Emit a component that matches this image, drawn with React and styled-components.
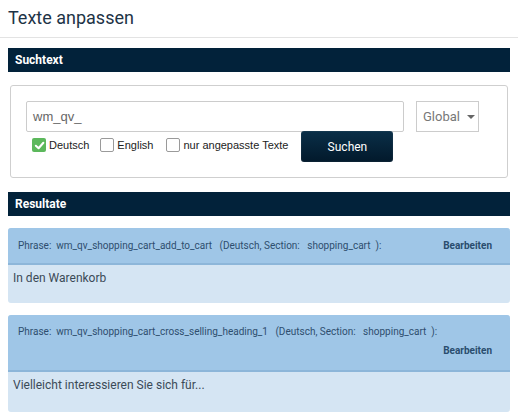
import React from "react";
import styled, { createGlobalStyle } from "styled-components";

const GlobalStyle = createGlobalStyle`
  body {
    margin: 0;
    background: #fff;
    font-family: Roboto, "Liberation Sans", sans-serif;
  }
`;

const Page = styled.div`
  width: 518px;
  height: 420px;
  overflow: hidden;
`;

const TitleBar = styled.div`
  padding: 6px 8px 0;
  height: 31px;
  border-bottom: 1px solid #e3e3e3;
`;

const Title = styled.h1`
  margin: 0;
  font-size: 18px;
  font-weight: 400;
  color: #1d3346;
  line-height: 24px;
`;

const Content = styled.div`
  padding: 10px 8px 0;
`;

const SectionBar = styled.div`
  background: #02223a;
  color: #fff;
  font-size: 12px;
  font-weight: 700;
  height: 24px;
  line-height: 24px;
  padding: 0 7px;
`;

const SearchBox = styled.div`
  margin: 13px 2px 14px;
  border: 1px solid #cfcfcf;
  border-radius: 3px;
  height: 93px;
  padding: 15px 15px 0;
  box-sizing: border-box;
`;

const InputRow = styled.div`
  display: flex;
  gap: 12px;
`;

const TextInput = styled.div`
  width: 378px;
  height: 31px;
  box-sizing: border-box;
  border: 1px solid #cccccc;
  border-radius: 2px;
  padding: 0 6px;
  font-family: "Liberation Sans", Arial, sans-serif;
  font-size: 13px;
  line-height: 29px;
  color: #666;
`;

const Select = styled.div`
  width: 63px;
  height: 31px;
  box-sizing: border-box;
  border: 1px solid #cccccc;
  display: flex;
  align-items: center;
  padding: 0 6px;
  gap: 7px;
  font-size: 13px;
  color: #777;
`;

const Caret = styled.span`
  width: 0;
  height: 0;
  border-left: 4px solid transparent;
  border-right: 4px solid transparent;
  border-top: 4px solid #666;
`;

const OptionRow = styled.div`
  display: flex;
  align-items: flex-start;
  padding-left: 6px;
`;

const CheckLabel = styled.label`
  display: flex;
  align-items: center;
  gap: 3px;
  margin-top: 6px;
  margin-right: ${(p) => p.mr}px;
  font-family: "Liberation Sans", Arial, sans-serif;
  font-size: 11px;
  color: #222;
`;

const Box = styled.span`
  width: 14px;
  height: 14px;
  box-sizing: border-box;
  border-radius: 2px;
  border: ${(p) => (p.checked ? "none" : "1px solid #9a9a9a")};
  background: ${(p) => (p.checked ? "#5cb85c" : "#fff")};
  display: flex;
  align-items: center;
  justify-content: center;
`;

const Button = styled.div`
  margin-top: -1px;
  width: 92px;
  height: 31px;
  box-sizing: border-box;
  border-radius: 3px;
  background: linear-gradient(#0a2f48, #02192b);
  box-shadow: inset 0 0 2px rgba(255, 255, 255, 0.15);
  color: #fff;
  font-size: 12px;
  display: flex;
  align-items: center;
  justify-content: center;
`;

const Panel = styled.div`
  border-radius: 3px;
  overflow: hidden;
  margin-top: 12px;
  background: #d5e5f3;
`;

const PanelHead = styled.div`
  background: #9fc6e7;
  border-bottom: 2px solid #8db6d9;
  padding: 0 18px 0 10px;
  height: ${(p) => p.h}px;
  box-sizing: border-box;
  display: flex;
  flex-direction: ${(p) => (p.wrap ? "column" : "row")};
  align-items: ${(p) => (p.wrap ? "stretch" : "center")};
  justify-content: ${(p) => (p.wrap ? "flex-start" : "space-between")};
  font-size: 10px;
  color: #2e4e6e;
`;

const Phrase = styled.span`
  white-space: pre;
  padding-top: ${(p) => (p.wrap ? 11 : 0)}px;
`;

const Edit = styled.span`
  font-weight: 700;
  color: #2a4d6e;
  align-self: ${(p) => (p.wrap ? "flex-end" : "center")};
  margin-left: auto;
  padding-top: ${(p) => (p.wrap ? 8 : 0)}px;
`;

const PanelBody = styled.div`
  height: ${(p) => p.h}px;
  padding: 6px 5px 0;
  box-sizing: border-box;
  font-size: 12px;
  color: #3b4a57;
`;

const Check = () => (
  <svg width="11" height="11" viewBox="0 0 12 12">
    <path d="M2 6.3 L5 9 L10.2 3" fill="none" stroke="#fff" strokeWidth="2.2" strokeLinecap="round" strokeLinejoin="round" />
  </svg>
);

const results = [
  {
    phrase: "wm_qv_shopping_cart_add_to_cart",
    text: "In den Warenkorb",
    head: 37,
    body: 38,
  },
  {
    phrase: "wm_qv_shopping_cart_cross_selling_heading_1",
    text: "Vielleicht interessieren Sie sich für...",
    head: 57,
    body: 40,
    wrap: true,
  },
];

export default function App() {
  return (
    <Page>
      <GlobalStyle />
      <TitleBar>
        <Title>Texte anpassen</Title>
      </TitleBar>
      <Content>
        <SectionBar>Suchtext</SectionBar>
        <SearchBox>
          <InputRow>
            <TextInput>wm_qv_</TextInput>
            <Select>
              Global <Caret />
            </Select>
          </InputRow>
          <OptionRow>
            <CheckLabel mr={11}>
              <Box checked>
                <Check />
              </Box>
              Deutsch
            </CheckLabel>
            <CheckLabel mr={13}>
              <Box />
              English
            </CheckLabel>
            <CheckLabel mr={13}>
              <Box />
              nur angepasste Texte
            </CheckLabel>
            <Button>Suchen</Button>
          </OptionRow>
        </SearchBox>
        <SectionBar>Resultate</SectionBar>
        {results.map((r) => (
          <Panel key={r.phrase}>
            <PanelHead h={r.head} wrap={r.wrap ? 1 : 0}>
              <Phrase wrap={r.wrap ? 1 : 0}>
                {`Phrase:  ${r.phrase}   (Deutsch, Section:   shopping_cart  ):`}
              </Phrase>
              <Edit wrap={r.wrap ? 1 : 0}>Bearbeiten</Edit>
            </PanelHead>
            <PanelBody h={r.body}>{r.text}</PanelBody>
          </Panel>
        ))}
      </Content>
    </Page>
  );
}
